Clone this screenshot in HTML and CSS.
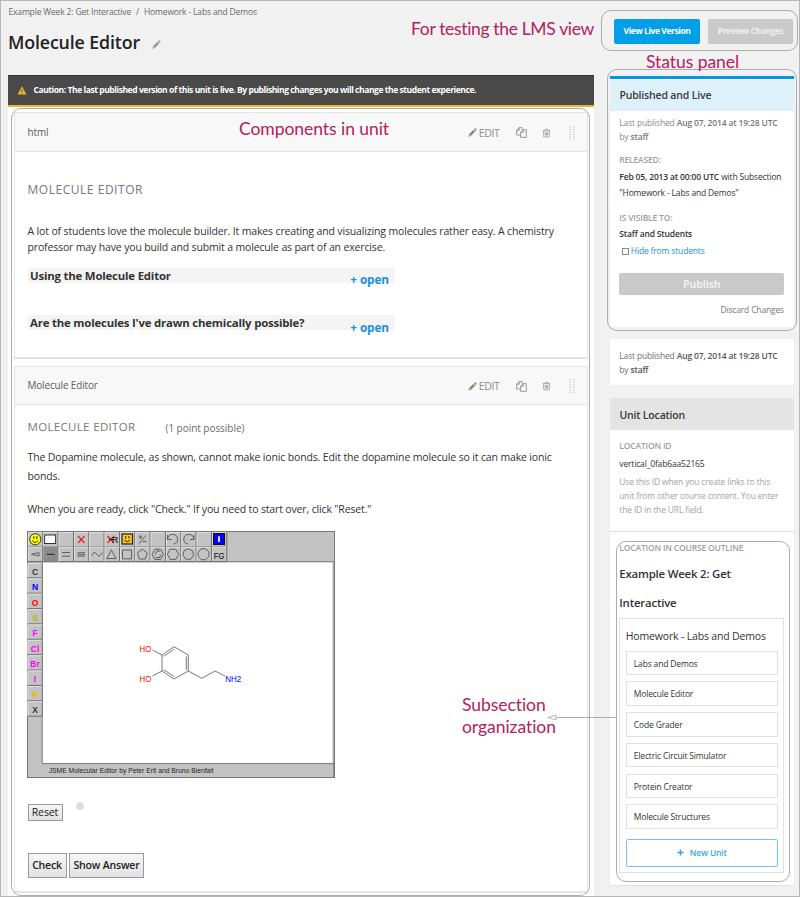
FILE: index.html
```html
<!DOCTYPE html>
<html lang="en">
<head>
<meta charset="utf-8">
<title>Molecule Editor</title>
<link rel="stylesheet" href="styles.css">
</head>
<body>
<svg class="defs" width="0" height="0" aria-hidden="true">
  <symbol id="pencil" viewBox="0 0 12 12"><path fill-rule="evenodd" d="M0.5 11.5L1.3 8.2L7.2 2.3L9.7 4.8L3.8 10.7ZM7.9 1.6L8.9 0.6Q9.5 0.1 10.1 0.6L11.4 1.9Q11.9 2.5 11.4 3.1L10.4 4.1ZM1.5 10.5L3.1 10.1L1.9 8.9Z"/></symbol>
  <symbol id="copy" viewBox="0 0 12 12"><path fill="none" stroke="currentColor" stroke-width="1" stroke-linejoin="round" d="M5 8.8H0.7V3.5L3.5 0.7H6.7V3M3.5 0.7V3.5H0.7M5 5.7L7.9 2.9H11.3V11.3H5ZM7.9 2.9V5.7H5"/></symbol>
  <symbol id="trash" viewBox="0 0 12 12"><path fill="none" stroke="currentColor" stroke-width="1" stroke-linejoin="round" d="M1 2.9H11M2.3 2.9V11.2H9.7V2.9M4.1 2.7L4.6 1H7.4L7.9 2.7M4.5 5V9.3M6 5V9.3M7.5 5V9.3"/></symbol>
  <symbol id="grip" viewBox="0 0 6 14"><path fill="none" stroke="currentColor" stroke-width="1.3" stroke-dasharray="1.3 1.2" d="M1.2 0.3V13.7M4.8 0.3V13.7"/></symbol>
</svg>
<div class="page">
  <main class="main">
    <nav class="crumbs"><span>Example Week 2: Get Interactive</span><span class="sep">/</span><span>Homework - Labs and Demos</span></nav>
    <h1 class="title">Molecule Editor<svg class="title-edit"><use href="#pencil"/></svg></h1>
    <div class="content">
      <div class="banner">
        <svg class="warn" viewBox="0 0 10 10"><path fill="#f0bb2b" d="M5 0.4L9.8 9.4H0.2Z"/><path stroke="#4a4a4a" stroke-width="1.1" d="M5 3.5V6.4M5 7.2V8.3"/></svg>
        <span>Caution: The last published version of this unit is live. By publishing changes you will change the student experience.</span>
      </div>
      <section class="component first">
        <header class="component-head"><span class="name">html</span>
          <span class="actions"><svg class="i-pencil"><use href="#pencil"/></svg><span class="edit">EDIT</span><svg class="i-copy"><use href="#copy"/></svg><svg class="i-trash"><use href="#trash"/></svg><svg class="i-grip"><use href="#grip"/></svg></span>
        </header>
        <div class="component-body">
          <h2 class="heading wide">MOLECULE EDITOR</h2>
          <p class="para intro">A lot of students love the molecule builder. It makes creating and visualizing molecules rather easy. A chemistry<br>professor may have you build and submit a molecule as part of an exercise.</p>
          <div class="fold"><b>Using the Molecule Editor</b><a>+ open</a></div>
          <div class="fold second"><b>Are the molecules I've drawn chemically possible?</b><a>+ open</a></div>
        </div>
      </section>
      <section class="component problem">
        <header class="component-head"><span class="name">Molecule Editor</span>
          <span class="actions"><svg class="i-pencil"><use href="#pencil"/></svg><span class="edit">EDIT</span><svg class="i-copy"><use href="#copy"/></svg><svg class="i-trash"><use href="#trash"/></svg><svg class="i-grip"><use href="#grip"/></svg></span>
        </header>
        <div class="component-body">
          <div class="problem-head"><h2 class="heading">MOLECULE EDITOR</h2><span class="points">(1 point possible)</span></div>
          <p class="para task">The Dopamine molecule, as shown, cannot make ionic bonds. Edit the dopamine molecule so it can make ionic<br>bonds.</p>
          <p class="para hint">When you are ready, click "Check." If you need to start over, click "Reset."</p>
          <svg class="jsme" viewBox="27 531 308 247">
            <defs>
              <g id="cell"><rect width="15.33" height="15.3" fill="#c3c3c3"/><path d="M0.5 15.3V0.5H15.33" fill="none" stroke="#dedede"/><path d="M0 14.8H14.8V0" fill="none" stroke="#6d6d6d"/></g>
            </defs>
            <rect x="27.5" y="531.5" width="307" height="246" fill="#c3c3c3" stroke="#777"/>
            <rect x="42" y="562" width="291.5" height="201.5" fill="#fff"/>
            <path d="M42.2 763V562M27.5 561.8H334M42 763.6H334M333.8 562V778" fill="none" stroke="#777"/>
            <path d="M333 562V763" stroke="#bbb"/>
            <g>
              <use href="#cell" x="28" y="532"/><use href="#cell" x="43.3" y="532"/><use href="#cell" x="58.7" y="532"/><use href="#cell" x="74" y="532"/><use href="#cell" x="89.3" y="532"/><use href="#cell" x="104.7" y="532"/><use href="#cell" x="120" y="532"/><use href="#cell" x="135.3" y="532"/><use href="#cell" x="150.7" y="532"/><use href="#cell" x="166" y="532"/><use href="#cell" x="181.3" y="532"/><use href="#cell" x="196.7" y="532"/><use href="#cell" x="212" y="532"/>
              <use href="#cell" x="28" y="546.8"/><use href="#cell" x="43.3" y="546.8"/><use href="#cell" x="58.7" y="546.8"/><use href="#cell" x="74" y="546.8"/><use href="#cell" x="89.3" y="546.8"/><use href="#cell" x="104.7" y="546.8"/><use href="#cell" x="120" y="546.8"/><use href="#cell" x="135.3" y="546.8"/><use href="#cell" x="150.7" y="546.8"/><use href="#cell" x="166" y="546.8"/><use href="#cell" x="181.3" y="546.8"/><use href="#cell" x="196.7" y="546.8"/><use href="#cell" x="212" y="546.8"/>
            </g>
            <rect x="43.3" y="547" width="14.6" height="14.5" fill="#8b8b8b"/>
            <g>
              <use href="#cell" x="27.5" y="563"/><use href="#cell" x="27.5" y="578.4"/><use href="#cell" x="27.5" y="593.8"/><use href="#cell" x="27.5" y="609.1"/><use href="#cell" x="27.5" y="624.5"/><use href="#cell" x="27.5" y="639.9"/><use href="#cell" x="27.5" y="655.3"/><use href="#cell" x="27.5" y="670.6"/><use href="#cell" x="27.5" y="686"/><use href="#cell" x="27.5" y="701.4"/>
            </g>
            <g class="atoms">
              <text x="35" y="574.5" fill="#333">C</text><text x="35" y="590" fill="#00f">N</text><text x="35" y="605.5" fill="#f00">O</text><text x="35" y="620.7" fill="#b5b500">S</text><text x="35" y="636" fill="#f0f">F</text><text x="35" y="651.8" fill="#f0f">Cl</text><text x="35" y="666.8" fill="#f0f">Br</text><text x="35" y="682" fill="#f0f">I</text><text x="35" y="697.5" fill="#f5b400">P</text><text x="35" y="712.8" fill="#333">X</text>
            </g>
            <circle cx="35.3" cy="539.3" r="5.6" fill="#ff0" stroke="#222" stroke-width=".9"/>
            <path d="M33.8 536.2V539M36.8 536.2V539M32.3 540.5Q35.3 544.3 38.3 540.5" fill="none" stroke="#222"/>
            <rect x="44.6" y="535" width="11" height="8.5" fill="#fff" stroke="#333"/>
            <path d="M47 554.3H54.5" stroke="#222"/>
            <path d="M78 536L84.5 543M84.5 536L78 543" stroke="#f21c1c" stroke-width="1.2"/>
            <path d="M107.5 536L114 543M107.5 543L114 536" stroke="#f21c1c" stroke-width="1.2"/><path d="M109 539.5H114" stroke="#222"/>
            <text x="111.7" y="543" class="tool">R</text>
            <rect x="122" y="534" width="10.5" height="10" fill="#fdc91a" stroke="#222" stroke-width="1.2"/>
            <path d="M125.7 536V538.6M129 536V538.6M124.5 540.3Q127.3 543.3 130.2 540.3" fill="none" stroke="#222"/>
            <g fill="none" stroke="#555" stroke-width=".9">
              <path d="M138.5 537H142.5M140.5 535V539M139 543.5L146 535.5M142.5 541.5H146.5"/>
              <path d="M167.5 535V539.5H171.5M167.7 539A5 4.8 0 1 1 173.5 544"/>
              <path d="M194 535V539.5H190M193.8 539A5 4.8 0 1 0 188 544"/>
              <path d="M31.5 554.3L39 552.5V556ZM62 552.5H70M62 556.2H70M77.5 552.7H85M77.5 554.4H85M77.5 556.1H85M91.5 556Q94 550 96.5 554Q99 558.5 102.5 552.5M111.3 549.8L116 558.6H106.8ZM122.5 550H131.5V558.8H122.5ZM142.3 549.2L147.3 552.9L145.4 559H139.3L137.4 552.9ZM152 554.3L155 549.2H160.5L163.5 554.3L160.5 559.4H155ZM155 554.5L157 551H160M160.8 554.5L159.5 557.5H155.8M167.3 554.3L170.3 549.2H175.8L178.8 554.3L175.8 559.4H170.3ZM188.2 548.8L192.5 550.8L193.6 555.3L190.7 559.2H185.8L182.9 555.3L184 550.8ZM201.3 548.8H205.7L208.9 552V556.5L205.7 559.7H201.3L198.1 556.5V552Z"/>
            </g>
            <rect x="213.5" y="533.5" width="11" height="11" fill="#00f" stroke="#111"/><path d="M219 536.2V542" stroke="#fff" stroke-width="1.7"/>
            <text x="213.8" y="558.5" class="tool" textLength="10.5" lengthAdjust="spacingAndGlyphs">FG</text>
            <g fill="none" stroke="#555" stroke-width=".8">
              <path d="M152.5 650L162 655L174 646.7L188.3 655V671L174 679L162 671V655M162 671L152.5 676M188.3 671L201.7 678.3L215 671L225 676M163.8 656.3L174.2 649M186.3 656.5V669.8M163.7 669.7L174.2 676.6"/>
            </g>
            <text x="139.5" y="652.3" class="label" fill="#f00" textLength="11.8" lengthAdjust="spacingAndGlyphs">HO</text>
            <text x="139.5" y="682.4" class="label" fill="#f00" textLength="11.8" lengthAdjust="spacingAndGlyphs">HO</text>
            <text x="225.3" y="682.4" class="label" fill="#00f" textLength="16" lengthAdjust="spacingAndGlyphs">NH2</text>
            <text x="48.7" y="772.8" class="credit" textLength="165" lengthAdjust="spacingAndGlyphs">JSME Molecular Editor by Peter Ertl and Bruno Bienfait</text>
          </svg>
          <div class="reset-row"><button class="btn reset">Reset</button><span class="dot"></span></div>
          <div class="answer-row"><button class="btn check">Check</button><button class="btn show">Show Answer</button></div>
        </div>
      </section>
    </div>
  </main>
  <aside class="side">
    <div class="top-actions"><a class="live">View Live Version</a><a class="preview">Preview Changes</a></div>
    <section class="card status">
      <h3 class="card-title">Published and Live</h3>
      <div class="card-body">
        <p class="meta">Last published <b>Aug 07, 2014 at 19:28 UTC</b><br>by <b>staff</b></p>
        <h4 class="label-sm">RELEASED:</h4>
        <p class="dark released"><b>Feb 05, 2013 at 00:00 UTC</b> with Subsection<br>"Homework - Labs and Demos"</p>
        <h4 class="label-sm visible">IS VISIBLE TO:</h4>
        <p class="dark staff"><b>Staff and Students</b></p>
        <p class="hide"><span class="box"></span>Hide from students</p>
        <a class="publish">Publish</a>
        <p class="discard">Discard Changes</p>
      </div>
    </section>
    <section class="card last"><p class="meta">Last published <b>Aug 07, 2014 at 19:28 UTC</b><br>by <b>staff</b></p></section>
    <section class="card location">
      <h3 class="card-title">Unit Location</h3>
      <div class="card-body">
        <h4 class="label-sm">LOCATION ID</h4>
        <p class="dark">vertical_0fab6aa52165</p>
        <p class="help">Use this ID when you create links to this<br>unit from other course content. You enter<br>the ID in the URL field.</p>
      </div>
      <div class="card-body outline">
        <h4 class="label-sm">LOCATION IN COURSE OUTLINE</h4>
        <p class="week">Example Week 2: Get<br>Interactive</p>
        <div class="tree">
          <p class="sub">Homework - Labs and Demos</p>
          <ul class="units"><li>Labs and Demos</li><li>Molecule Editor</li><li>Code Grader</li><li>Electric Circuit Simulator</li><li>Protein Creator</li><li>Molecule Structures</li></ul>
          <a class="new-unit"><svg viewBox="0 0 8 8"><path d="M4 0.5V7.5M0.5 4H7.5" stroke="currentColor" stroke-width="1.9"/></svg>New Unit</a>
        </div>
      </div>
    </section>
  </aside>

  <div class="ring ring-main"></div>
  <div class="ring ring-top"></div>
  <div class="ring ring-status"></div>
  <div class="ring ring-outline"></div>
  <svg class="arrow" viewBox="0 0 70 6"><path d="M9.5 3.5H70" stroke="#adadad"/><path d="M0.8 3.5L9 1.2V5.8Z" fill="#fff" stroke="#adadad" stroke-width=".9"/></svg>
  <div class="note note-top">For testing the LMS view</div>
  <div class="note note-status">Status panel</div>
  <div class="note note-main">Components in unit</div>
  <div class="note note-sub">Subsection<br>organization</div>
</div>
</body>
</html>
```
FILE: styles.css
```css
* { box-sizing: border-box; margin: 0; padding: 0; }
body { background: #f1f1f1; }
.defs { position: absolute; }
svg { display: block; }
b { font-weight: 600; }
.page {
  position: relative; display: flex; justify-content: space-between;
  width: 800px; height: 897px; overflow: hidden;
  border: 1px solid #b6b6b6; padding: 0 5px 0 7px;
  background: #f1f1f1; color: #333;
  font: 400 8.5px/14px "Open Sans", sans-serif; letter-spacing: -.16px;
}

/* main column */
.main { width: 586px; display: flex; flex-direction: column; }
.crumbs { padding: 4px 0 0 .5px; color: #6a6a6a; display: flex; }
.crumbs .sep { margin: 0 5px; }
.title { display: flex; align-items: center; height: 24px; margin-top: 11px; color: #222; font-size: 17.8px; font-weight: 600; line-height: 24px; letter-spacing: -.13px; }
.title-edit { width: 9px; height: 9px; margin: 5px 0 0 12px; fill: #999; }
.content { flex: 1; margin-top: 21px; background: #fff; }
.banner { height: 32px; display: flex; align-items: center; padding: 0 0 1px 8.5px; background: #4a4a4a; border-top: 1px solid #333; border-bottom: 2px solid #e9b52c; color: #fff; font-weight: 700; letter-spacing: -.43px; white-space: nowrap; }
.warn { width: 10px; height: 9px; margin-right: 7px; }
.component { width: 574px; margin-left: 6px; border: 1px solid #e4e4e4; border-bottom-width: 2px; }
.first { margin-top: 5px; height: 247px; }
.problem { margin-top: 7px; height: 527px; }
.component-head { display: flex; align-items: center; justify-content: space-between; height: 39px; padding: 0 12px 0 12.5px; background: #f8f8f8; border-bottom: 1px solid #e4e4e4; color: #5a5a5a; font-size: 9.9px; letter-spacing: -.1px; }
.problem .component-head { height: 38px; }
.actions { display: flex; align-items: center; color: #8f8f8f; fill: #8a8a8a; padding-top: 1px; }
.problem .name { padding-bottom: 2px; }
.edit { font-size: 10.6px; letter-spacing: -.4px; margin: 0 16.5px 0 2px; }
.i-pencil { width: 9px; height: 9px; }
.i-copy { width: 11px; height: 11px; margin-right: 15px; }
.i-trash { width: 9px; height: 10px; margin-right: 18px; }
.i-grip { width: 6px; height: 14px; color: #c6c6ca; }
.component-body { padding-left: 12.5px; }
.heading { color: #777; font-size: 11.5px; font-weight: 400; line-height: 16px; letter-spacing: .33px; }
.heading.wide { padding-top: 30px; font-size: 12px; letter-spacing: .53px; }
.para { font-size: 10.5px; letter-spacing: -.15px; white-space: nowrap; }
.intro { margin-top: 25px; line-height: 16px; }
.fold { position: relative; display: flex; align-items: center; width: 367px; height: 15px; margin-top: 13px; padding: 0 0 0 2.5px; background: #f4f4f4; font-size: 11.4px; letter-spacing: -.19px; }
.fold b { font-weight: 700; line-height: 15px; }
.fold a { position: absolute; right: 5.5px; top: 4px; color: #1b91d8; font-weight: 700; font-size: 11.8px; letter-spacing: -.1px; }
.fold.second { margin-top: 32px; }
.fold.second a { top: 5px; }
.problem-head { display: flex; align-items: center; padding-top: 14px; }
.points { margin-left: 30px; color: #6a6a6a; font-size: 10px; letter-spacing: -.04px; padding-top: 1px; }
.task { margin-top: 12.5px; line-height: 19.3px; }
.hint { margin-top: 14px; line-height: 18px; }
.jsme { width: 308px; height: 247px; margin: 13.4px 0 0 -.5px; font-family: "Liberation Sans", Arial, sans-serif; letter-spacing: 0; }
.atoms { font-size: 8.5px; font-weight: 700; text-anchor: middle; }
.tool { font-size: 9px; fill: #222; stroke: #222; stroke-width: .2px; }
.label { font-size: 9px; }
.credit { font-size: 6.5px; fill: #222; }
.reset-row { display: flex; margin-top: 26px; }
.btn { display: block; border: 1px solid #999; background: linear-gradient(#f6f6f6, #e2e2e2); color: #222; font-family: inherit; font-size: 10.5px; letter-spacing: -.1px; text-align: center; white-space: nowrap; }
.reset { width: 35px; height: 17px; line-height: 15px; }
.dot { width: 8px; height: 8px; margin: -2.5px 0 0 13px; border-radius: 50%; background: #dedede; }
.answer-row { display: flex; gap: 2.5px; margin-top: 32px; }
.check, .show { height: 25px; line-height: 23px; font-weight: 600; letter-spacing: -.18px; }
.check { width: 39px; }
.show { width: 75px; }

/* sidebar */
.side { width: 184px; }
.top-actions { display: flex; justify-content: space-between; margin: 18px 1px 0 4px; color: #fff; font-weight: 700; letter-spacing: -.43px; line-height: 24px; text-align: center; }
.live { width: 86px; height: 25px; background: #009fe8; border-radius: 2px; }
.preview { width: 85px; height: 25px; background: #c9c9c9; color: #eee; border-radius: 2px; }
.card { background: #fff; }
.card-title { padding-left: 9.4px; font-size: 10.5px; font-weight: 600; letter-spacing: -.17px; color: #3a3a3a; height: 31.5px; line-height: 32px; }
.card-body { padding: 0 10px 0 9.3px; }
.status { margin-top: 31.5px; height: 251.5px; border-top: 3px solid #0097e6; }
.status .card-title { background: #def1fb; border-top: 1px solid #fff; height: 32px; line-height: 30px; }
.status .meta { padding-top: 5.5px; }
.meta { color: #8b8b8b; line-height: 14px; white-space: nowrap; }
.meta b { color: #777; }
.last .meta { color: #6f6f6f; }
.last .meta b { color: #555; }
.label-sm { color: #a0a0a0; font-size: 8.5px; font-weight: 600; letter-spacing: -.18px; line-height: 14px; }
.status .label-sm { margin-top: 9px; }
.dark { color: #333; }
.released { margin-top: 1.5px; line-height: 16.5px; white-space: nowrap; }
.status .visible { margin-top: 9px; }
.staff { margin-top: 2px; }
.hide { display: flex; align-items: center; margin-top: 3.5px; padding-left: 2.5px; color: #1b8fe0; }
.box { width: 7px; height: 7px; border: 1px solid #8a8a8a; margin-right: 2px; }
.publish { display: block; width: 165px; height: 22px; margin-top: 15px; background: #c9c9c9; border-radius: 2px; color: #eee; font-size: 10.5px; font-weight: 700; line-height: 22px; text-align: center; }
.discard { margin-top: 7.5px; color: #777; text-align: right; }
.last { margin-top: 12px; height: 46px; padding: 9.5px 0 0 9.3px; }
.location { margin-top: 13px; height: 488px; border-bottom: 1px solid #e2e2e2; }
.location .card-title { background: #e4e4e4; line-height: 34px; }
.location .label-sm { padding-top: 9.5px; }
.location .dark { margin-top: 3.5px; }
.help { margin-top: 4.5px; color: #a3a3a3; white-space: nowrap; }
.outline { margin-top: 13.5px; border-top: 1px solid #ddd; }
.week { margin-top: 4px; font-size: 11.4px; font-weight: 600; line-height: 29px; letter-spacing: -.19px; }
.tree { width: 165px; height: 255px; margin-top: .5px; padding: 9px 5.5px 0; border: 1px solid #e2e2e2; }
.sub { font-size: 10.5px; line-height: 16px; letter-spacing: -.17px; white-space: nowrap; }
.units { list-style: none; margin-top: 7px; display: grid; gap: 6.3px; }
.units li { width: 152.5px; height: 24.5px; padding-left: 7px; border: 1px solid #e0e0e0; line-height: 23px; }
.new-unit { display: flex; align-items: center; justify-content: center; width: 152.5px; height: 28px; margin-top: 9.7px; border: 1px solid #74c7f2; border-radius: 2px; color: #38a9e6; font-weight: 600; }
.new-unit svg { width: 7px; height: 7px; margin-right: 5.5px; }

/* callouts drawn over the interface */
.ring { position: absolute; border: 1px solid #adadad; border-radius: 10px; }
.ring-main { left: 10px; top: 107px; width: 579px; height: 787.5px; }
.ring-top { left: 600px; top: 9px; width: 197px; height: 41px; }
.ring-status { left: 606px; top: 68px; width: 190px; height: 262px; }
.ring-outline { left: 615px; top: 540px; width: 174px; height: 341px; }
.arrow { position: absolute; left: 546px; top: 713px; width: 70px; height: 6px; }
.note { position: absolute; color: #b5205f; font: 400 17.5px/22px Lato, "Open Sans", sans-serif; letter-spacing: -.05px; white-space: nowrap; }
.note-top { left: 410px; top: 17px; letter-spacing: -.34px; }
.note-status { left: 645px; top: 50px; }
.note-main { left: 238px; top: 117px; }
.note-sub { left: 461px; top: 693px; }
```
